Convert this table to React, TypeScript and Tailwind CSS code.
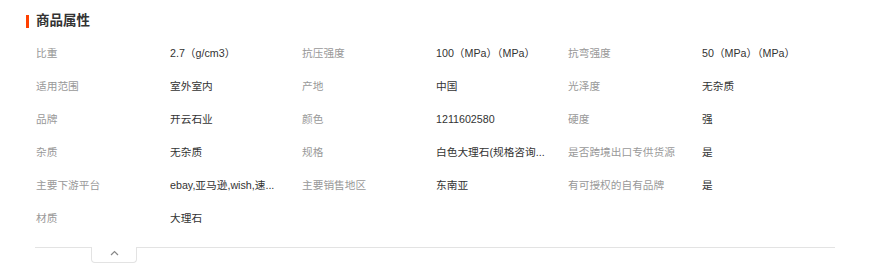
const attrs: [string, string][] = [
  ['比重', '2.7（g/cm3）'],
  ['抗压强度', '100（MPa）（MPa）'],
  ['抗弯强度', '50（MPa）（MPa）'],
  ['适用范围', '室外室内'],
  ['产地', '中国'],
  ['光泽度', '无杂质'],
  ['品牌', '开云石业'],
  ['颜色', '1211602580'],
  ['硬度', '强'],
  ['杂质', '无杂质'],
  ['规格', '白色大理石(规格咨询...'],
  ['是否跨境出口专供货源', '是'],
  ['主要下游平台', 'ebay,亚马逊,wish,速...'],
  ['主要销售地区', '东南亚'],
  ['有可授权的自有品牌', '是'],
  ['材质', '大理石'],
];

const App = () => {
  return (
    <div
      className="w-[872px] h-[272px] bg-white pt-[14px]"
      style={{ fontFamily: '"Liberation Sans", "Noto Sans CJK SC", sans-serif' }}
    >
      <div className="flex items-center pl-[26px] h-[14px]">
        <span className="w-[3px] h-[13px] bg-[#ff4000]" />
        <h2 className="ml-[7px] text-[13.5px] leading-[14px] font-bold text-[#333]">商品属性</h2>
      </div>
      <div className="mt-[9px] ml-[36px] grid grid-cols-[134px_132px_134px_132px_134px_132px] text-[10.7px]">
        {attrs.map(([k, v]) => (
          <div key={k} className="contents">
            <div className="h-[33px] leading-[33px] text-[#999] whitespace-nowrap">{k}</div>
            <div className="h-[33px] leading-[33px] text-[#333] whitespace-nowrap">{v}</div>
          </div>
        ))}
      </div>
      <div className="mt-[12px] ml-[35px] w-[800px] border-t border-[#e3e3e3]" />
      <div className="ml-[91px] w-[46px] h-[16px] -mt-px bg-white border border-t-0 border-[#e3e3e3] rounded-b-[4px] flex justify-center pt-[3px]">
        <svg width="9" height="6" viewBox="0 0 9 6" fill="none">
          <polyline points="1,5 4.5,1.5 8,5" stroke="#888" strokeWidth="1.2" />
        </svg>
      </div>
    </div>
  );
};

export default App;
